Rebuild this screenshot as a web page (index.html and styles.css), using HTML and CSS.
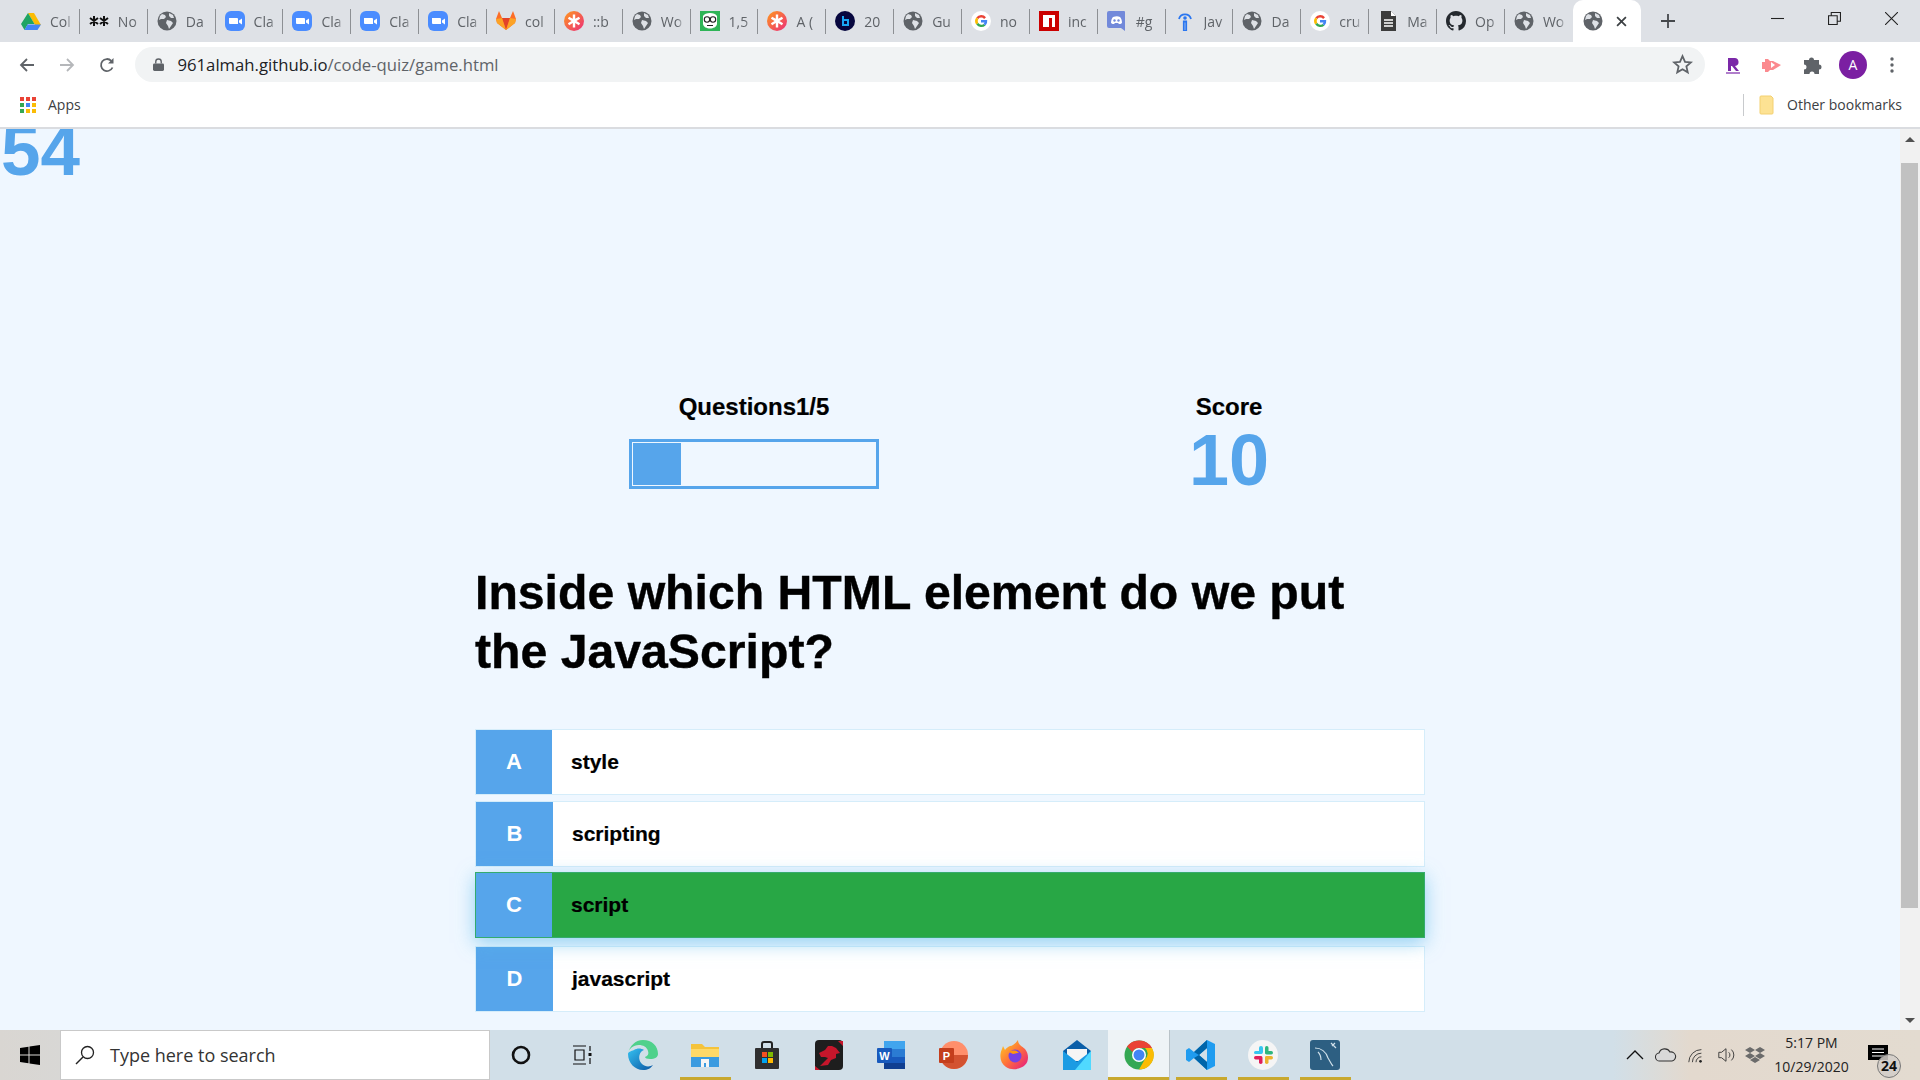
FILE: index.html
```html
<!DOCTYPE html>
<html lang="en">
<head>
    <meta charset="UTF-8">
    <meta name="viewport" content="width=device-width, initial-scale=1.0">
    <title>Code Quiz</title>
    <link rel="stylesheet" href="styles.css">
</head>
<body>

<!-- shared icons -->
<svg class="defs" width="0" height="0">
    <symbol id="i-globe" viewBox="0 0 20 20">
        <circle cx="10" cy="10" r="9.500" fill="#5f6368"/>
        <path d="M5 3l3 1 1 2-2 2-3 0-2 1 1-4zM10 9l4 1 2 2-2 3-2 3-1-3-2-3zM12 2l4 2 1 3-3 0-2-2z" fill="#dee1e6"/>
    </symbol>
    <symbol id="i-zoom" viewBox="0 0 20 20">
        <rect width="20" height="20" rx="6" fill="#4a8cff"/>
        <path d="M4 7h8a1 1 0 0 1 1 1v5H5a1 1 0 0 1-1-1zM14 9.500l3-2v6l-3-2z" fill="#fff"/>
    </symbol>
    <symbol id="i-g" viewBox="0 0 20 20">
        <circle cx="10" cy="10" r="10" fill="#fff"/>
        <path d="M15 6.200A6.200 6.200 0 0 0 5.300 6.400l2 1.600A3.700 3.700 0 0 1 13.100 8z" fill="#ea4335"/>
        <path d="M5.300 6.400a6.200 6.200 0 0 0 0 7.200l2-1.600a3.700 3.700 0 0 1 0-4z" fill="#fbbc05"/>
        <path d="M5.300 13.600a6.200 6.200 0 0 0 9.200.8l-2-1.500a3.700 3.700 0 0 1-5.200-.9z" fill="#34a853"/>
        <path d="M16.200 9H10v2.400h3.500a3 3 0 0 1-1 1.500l2 1.500A6.200 6.200 0 0 0 16.200 9z" fill="#4285f4"/>
    </symbol>
    <symbol id="i-star" viewBox="0 0 20 20">
        <defs>
            <linearGradient id="g-star" x1="0" y1="0" x2="1" y2="1">
                <stop offset="0" stop-color="#ff9a1e"/>
                <stop offset="1" stop-color="#ec2c7a"/>
            </linearGradient>
        </defs>
        <circle cx="10" cy="10" r="10" fill="url(#g-star)"/>
        <path d="M8.800 3.500h2.400v4.300l3.700-2.100 1.200 2-3.700 2.300 3.700 2.200-1.200 2-3.700-2.100v4.300H8.800v-4.300l-3.700 2.100-1.200-2 3.700-2.200-3.700-2.300 1.200-2 3.700 2.100z" fill="#fff"/>
    </symbol>
</svg>

<header class="chrome">
    <div class="tabstrip">
        <div class="tab">
            <svg class="fav" viewBox="0 0 20 20"><path d="M7 2h6l7 12h-6z" fill="#fbbc04"/><path d="M7 2l6.500 11H7L3.500 19 0 13z" fill="#1fa463"/><path d="M6.500 13.500H20L16.500 19H3.500z" fill="#4285f4"/></svg>
            <span class="tab-text">Col</span>
        </div>
        <div class="tab">
            <svg class="fav" viewBox="0 0 20 20"><path d="M5 5v10M1 7l8 6M9 7l-8 6M15 5v10M11 7l8 6M19 7l-8 6" stroke="#111" stroke-width="2" fill="none"/></svg>
            <span class="tab-text">No</span>
        </div>
        <div class="tab"><svg class="fav"><use href="#i-globe"/></svg><span class="tab-text">Da</span></div>
        <div class="tab"><svg class="fav"><use href="#i-zoom"/></svg><span class="tab-text">Cla</span></div>
        <div class="tab"><svg class="fav"><use href="#i-zoom"/></svg><span class="tab-text">Cla</span></div>
        <div class="tab"><svg class="fav"><use href="#i-zoom"/></svg><span class="tab-text">Cla</span></div>
        <div class="tab"><svg class="fav"><use href="#i-zoom"/></svg><span class="tab-text">Cla</span></div>
        <div class="tab">
            <svg class="fav" viewBox="0 0 20 20"><path d="M10 19L1 12l-1-4L3 0l3 7h8l3-7 3 8-1 4z" fill="#fc6d26"/><path d="M10 19L6 7h8z" fill="#e24329"/><path d="M10 19L1 12l-1-4 6-1zM10 19l9-7 1-4-6-1z" fill="#fca326"/></svg>
            <span class="tab-text">col</span>
        </div>
        <div class="tab"><svg class="fav"><use href="#i-star"/></svg><span class="tab-text">::b</span></div>
        <div class="tab"><svg class="fav"><use href="#i-globe"/></svg><span class="tab-text">Wo</span></div>
        <div class="tab">
            <svg class="fav" viewBox="0 0 20 20"><rect width="20" height="20" fill="#2fb457"/><path d="M3 5c2-4 12-4 14 0v8c-1 6-13 6-14 0z" fill="#fff"/><circle cx="7" cy="8.500" r="2.700" fill="#fff" stroke="#222" stroke-width="1.100"/><circle cx="13" cy="8.500" r="2.700" fill="#fff" stroke="#222" stroke-width="1.100"/><path d="M7 14.500h6" stroke="#222"/></svg>
            <span class="tab-text">1,5</span>
        </div>
        <div class="tab"><svg class="fav"><use href="#i-star"/></svg><span class="tab-text">A (</span></div>
        <div class="tab">
            <svg class="fav" viewBox="0 0 20 20"><circle cx="10" cy="10" r="10" fill="#07073f"/><path d="M8 5v9h5v-5H8" fill="none" stroke="#19a7f5" stroke-width="2"/></svg>
            <span class="tab-text">20</span>
        </div>
        <div class="tab"><svg class="fav"><use href="#i-globe"/></svg><span class="tab-text">Gu</span></div>
        <div class="tab"><svg class="fav"><use href="#i-g"/></svg><span class="tab-text">no</span></div>
        <div class="tab">
            <svg class="fav" viewBox="0 0 20 20"><rect width="20" height="20" fill="#cb0000"/><path d="M4 4h12v12h-3V7h-3v9H4z" fill="#fff"/></svg>
            <span class="tab-text">inc</span>
        </div>
        <div class="tab">
            <svg class="fav" viewBox="0 0 20 20"><path d="M2 0h15a1 1 0 0 1 1 1v19l-4-3H2a2 2 0 0 1-2-2V2a2 2 0 0 1 2-2z" fill="#7289da"/><path d="M4 12c0-3 1-5 2-6 3-1 5-1 7 0 1 1 2 3 2 6-1 1-2 1-3 1l-1-1H8l-1 1c-1 0-2 0-3-1z" fill="#fff"/><circle cx="7.500" cy="9.500" r="1.200" fill="#7289da"/><circle cx="11.500" cy="9.500" r="1.200" fill="#7289da"/></svg>
            <span class="tab-text">#g</span>
        </div>
        <div class="tab">
            <svg class="fav" viewBox="0 0 20 20"><circle cx="10" cy="7" r="1.800" fill="#2a76f0"/><path d="M8.800 10.500h2.400V20H8.800zM4 8a6.200 6.200 0 0 1 12 0" fill="none" stroke="#2a76f0" stroke-width="1.800"/></svg>
            <span class="tab-text">Jav</span>
        </div>
        <div class="tab"><svg class="fav"><use href="#i-globe"/></svg><span class="tab-text">Da</span></div>
        <div class="tab"><svg class="fav"><use href="#i-g"/></svg><span class="tab-text">cru</span></div>
        <div class="tab">
            <svg class="fav" viewBox="0 0 20 20"><path d="M3 0h10l5 5v15H3z" fill="#3c3c3c"/><path d="M6 9h9M6 12h9M6 15h9" stroke="#fff" stroke-width="1.300"/><path d="M13 0v5h5z" fill="#fff"/></svg>
            <span class="tab-text">Ma</span>
        </div>
        <div class="tab">
            <svg class="fav" viewBox="0 0 16 16"><path fill="#24292e" d="M8 0C3.580 0 0 3.580 0 8c0 3.540 2.290 6.530 5.470 7.590.4.070.55-.17.55-.38 0-.19-.01-.82-.01-1.490-2.010.37-2.530-.49-2.690-.94-.09-.23-.48-.94-.82-1.130-.28-.15-.68-.52-.01-.53.630-.01 1.080.580 1.230.820.720 1.210 1.870.870 2.330.660.070-.520.280-.870.510-1.070-1.780-.200-3.640-.890-3.640-3.950 0-.870.310-1.590.820-2.150-.080-.200-.360-1.020.080-2.120 0 0 .670-.210 2.200.820.640-.180 1.320-.270 2-.270s1.360.090 2 .270c1.530-1.040 2.200-.820 2.200-.820.440 1.100.160 1.920.080 2.120.510.560.820 1.270.820 2.150 0 3.070-1.870 3.750-3.650 3.950.290.250.540.730.540 1.480 0 1.070-.010 1.930-.010 2.200 0 .210.150.460.550.380A8.010 8.010 0 0 0 16 8c0-4.420-3.580-8-8-8z"/></svg>
            <span class="tab-text">Op</span>
        </div>
        <div class="tab tab-last"><svg class="fav"><use href="#i-globe"/></svg><span class="tab-text">Wo</span></div>
        <div class="tab-active">
            <svg class="fav"><use href="#i-globe"/></svg>
            <svg class="tab-close" viewBox="0 0 10 10"><path d="M1 1l8 8M9 1l-8 8" stroke="#3c4043" stroke-width="1.600"/></svg>
        </div>
        <svg class="tab-new" viewBox="0 0 14 14"><path d="M7 0v14M0 7h14" stroke="#45484c" stroke-width="1.800"/></svg>
        <div class="win-btns">
            <svg class="win-btn" viewBox="0 0 12 12"><path d="M0 6h12" stroke="#222" stroke-width="1"/></svg>
            <svg class="win-btn" viewBox="0 0 12 12"><path d="M.5 3.500h8v8h-8zM3 3.500V.5h8.500v8H8.500" fill="none" stroke="#222"/></svg>
            <svg class="win-btn" viewBox="0 0 12 12"><path d="M0 0l12 12M12 0L0 12" stroke="#222"/></svg>
        </div>
    </div>

    <div class="toolbar">
        <svg class="nav-ico" viewBox="0 0 16 16"><path d="M15 8H2M8 2L2 8l6 6" fill="none" stroke="#5f6368" stroke-width="1.800"/></svg>
        <svg class="nav-ico" viewBox="0 0 16 16"><path d="M1 8h13M8 2l6 6-6 6" fill="none" stroke="#b5b7ba" stroke-width="1.800"/></svg>
        <svg class="nav-ico" viewBox="0 0 16 16"><path d="M13.500 10.500A6 6 0 1 1 12.300 3.800" fill="none" stroke="#5f6368" stroke-width="1.800"/><path d="M14.500 1v5.500H9z" fill="#5f6368"/></svg>
        <div class="omnibox">
            <svg class="lock" viewBox="0 0 12 14"><path d="M3 6V4a3 3 0 0 1 6 0v2" fill="none" stroke="#5f6368" stroke-width="1.500"/><rect y="6" width="12" height="8" rx="1.500" fill="#5f6368"/></svg>
            <span class="url"><span class="url-host">961almah.github.io</span>/code-quiz/game.html</span>
            <svg class="bm-star" viewBox="0 0 20 20"><path d="M10 2l2.400 5.500 5.600.5-4.300 3.800 1.300 5.700-5-3-5 3 1.300-5.700L2 8l5.600-.5z" fill="none" stroke="#5f6368" stroke-width="1.700"/></svg>
        </div>
        <div class="ext-row">
            <svg class="ext ext-r" viewBox="0 0 20 20"><path d="M5 16V3h6a4 4 0 0 1 1 8l4 5h-3l-4-5H8v5z" fill="#7b28a8"/><path d="M3 18h14" stroke="#7b28a8" stroke-width="1.200"/></svg>
            <svg class="ext ext-play" viewBox="0 0 20 20"><path d="M0 7h3V4h3l2 2h3l8 4-8 5H8l-2 2H3v-3H0z" fill="#fb8a8f"/><path d="M9 7l4 3-4 3z" fill="#fff"/></svg>
            <svg class="ext ext-puzzle" viewBox="0 0 20 20"><path d="M1 5h5a2.500 2.500 0 1 1 5 0h5v4.500a2.500 2.500 0 1 1 0 5V19h-4.500a2.500 2.500 0 1 0-5 0H1v-4.500a2.500 2.500 0 1 0 0-5z" fill="#5f6368"/></svg>
            <div class="avatar">A</div>
            <svg class="ext-menu" viewBox="0 0 4 16"><circle cx="2" cy="2" r="1.700" fill="#5f6368"/><circle cx="2" cy="8" r="1.700" fill="#5f6368"/><circle cx="2" cy="14" r="1.700" fill="#5f6368"/></svg>
        </div>
    </div>

    <div class="bookmarks">
        <svg class="apps" viewBox="0 0 16 16">
            <rect width="4" height="4" fill="#ea4335"/><rect x="6" width="4" height="4" fill="#ea4335"/><rect x="12" width="4" height="4" fill="#ea4335"/>
            <rect y="6" width="4" height="4" fill="#34a853"/><rect x="6" y="6" width="4" height="4" fill="#4285f4"/><rect x="12" y="6" width="4" height="4" fill="#fbbc05"/>
            <rect y="12" width="4" height="4" fill="#34a853"/><rect x="6" y="12" width="4" height="4" fill="#fbbc05"/><rect x="12" y="12" width="4" height="4" fill="#fbbc05"/>
        </svg>
        <span class="bm-text">Apps</span>
        <div class="bm-other">
            <span class="bm-sep"></span>
            <svg class="folder" viewBox="0 0 16 20"><path d="M2 1h10l2 2v15a1 1 0 0 1-1 1H2a1 1 0 0 1-1-1V2a1 1 0 0 1 1-1z" fill="#fde293" stroke="#f3d071"/></svg>
            <span class="bm-text">Other bookmarks</span>
        </div>
    </div>
</header>

<div class="viewport">
    <main class="page">
        <div class="timer">54</div>
        <div class="quiz">
            <div class="hud">
                <div class="hud-item">
                    <p class="hud-label">Questions1/5</p>
                    <div class="progress"><div class="progress-fill"></div></div>
                </div>
                <div class="hud-item">
                    <p class="hud-label">Score</p>
                    <div class="hud-score">10</div>
                </div>
            </div>
            <h2 class="question">Inside which HTML element do we put the JavaScript?</h2>
            <div class="choices">
                <div class="choice"><div class="choice-prefix">A</div><div class="choice-text">style</div></div>
                <div class="choice choice-wide"><div class="choice-prefix">B</div><div class="choice-text">scripting</div></div>
                <div class="choice choice-correct"><div class="choice-prefix">C</div><div class="choice-text">script</div></div>
                <div class="choice choice-wide"><div class="choice-prefix">D</div><div class="choice-text">javascript</div></div>
            </div>
        </div>
    </main>
    <div class="scrollbar">
        <div class="scroll-btn"><span class="arrow-up"></span></div>
        <div class="scroll-track"><div class="scroll-thumb"></div></div>
        <div class="scroll-btn"><span class="arrow-down"></span></div>
    </div>
</div>

<footer class="taskbar">
    <div class="start">
        <svg class="start-logo" viewBox="0 0 20 20"><path d="M0 3l8.500-1.300V9.500H0zM9.500 1.500L20 0v9.500H9.500zM0 10.500h8.500v7.800L0 17zM9.500 10.500H20V20L9.500 18.500z" fill="#000"/></svg>
    </div>
    <div class="search">
        <svg class="search-ico" viewBox="0 0 20 20"><circle cx="12.500" cy="7.500" r="6" fill="none" stroke="#222" stroke-width="1.300"/><path d="M8 12l-7 7" stroke="#222" stroke-width="1.400"/></svg>
        <span class="search-text">Type here to search</span>
    </div>
    <div class="task-apps">
        <div class="task task-narrow"><svg class="task-ico task-small" viewBox="0 0 20 20"><circle cx="10" cy="10" r="8" fill="none" stroke="#111" stroke-width="2.600"/></svg></div>
        <div class="task task-narrow"><svg class="task-ico task-small" viewBox="0 0 20 20"><path d="M1 1h13M1 19h13M3 5h9v10H3zM18 1v5M18 13v6" fill="none" stroke="#111" stroke-width="1.200"/><rect x="16.500" y="8" width="3" height="3" fill="#111"/></svg></div>
        <div class="task">
            <svg class="task-ico" viewBox="0 0 30 30"><defs><linearGradient id="g-edge" x1="0" y1="0" x2="1" y2="1"><stop offset="0" stop-color="#35c1f1"/><stop offset="1" stop-color="#0b57a4"/></linearGradient></defs><path d="M15 0c9 0 15 6 15 14 0 3-3 5-8 5-3 0-5-1-5-2 3-1 4-3 3-6-1-4-5-6-9-6-6 0-10 4-11 8C2 6 7 0 15 0z" fill="#4fd18b"/><path d="M0 14c0 9 7 16 15 16 5 0 8-2 10-5-3 2-8 2-11-1-3-3-4-8-1-12 1-1 2-2 3-2-3-2-7-2-10 0-3 1-6 2-6 4z" fill="url(#g-edge)"/></svg>
        </div>
        <div class="task task-open">
            <svg class="task-ico" viewBox="0 0 30 30"><path d="M1 4h11l3 3h14v4H1z" fill="#f5c33b"/><path d="M1 9h28v18H1z" fill="#ffd968"/><path d="M1 17h28v10H1z" fill="#3b9be0"/><path d="M11 19h8v8h-3v-4h-2v4h-3z" fill="#f5f5f5"/></svg>
        </div>
        <div class="task">
            <svg class="task-ico" viewBox="0 0 30 30"><path d="M10 8V4a2 2 0 0 1 2-2h6a2 2 0 0 1 2 2v4" fill="none" stroke="#222" stroke-width="2"/><rect x="3" y="8" width="24" height="21" rx="1" fill="#2f2f2f"/><rect x="10" y="12" width="5" height="5" fill="#f25022"/><rect x="16" y="12" width="5" height="5" fill="#7fba00"/><rect x="10" y="18" width="5" height="5" fill="#00a4ef"/><rect x="16" y="18" width="5" height="5" fill="#ffb900"/></svg>
        </div>
        <div class="task">
            <svg class="task-ico" viewBox="0 0 30 30"><rect x="1" y="0" width="28" height="30" rx="4" fill="#1e1e1e"/><path d="M24 1l5 5V1zM1 26l5 4H1z" fill="#c5162b"/><path d="M5 13l6-3 3-4 4 0 4 2 4 5-4 1 0 4-5 2-3 5-8 1 5-5 3-3-3-1-4 0z" fill="#c5162b"/></svg>
        </div>
        <div class="task">
            <svg class="task-ico" viewBox="0 0 30 30"><rect x="8" y="1" width="21" height="8" fill="#41a5ee"/><rect x="8" y="9" width="21" height="8" fill="#2b7cd3"/><rect x="8" y="17" width="21" height="6" fill="#185abd"/><rect x="8" y="23" width="21" height="6" fill="#103f91"/><rect x="1" y="8" width="15" height="15" rx="1" fill="#185abd"/><text class="task-letter" x="8.500" y="20">W</text></svg>
        </div>
        <div class="task">
            <svg class="task-ico" viewBox="0 0 30 30"><circle cx="16" cy="15" r="14" fill="#ff8f6b"/><path d="M16 15h14a14 14 0 0 1-28 0z" fill="#d35230"/><rect x="1" y="8" width="15" height="15" rx="1" fill="#c43e1c"/><text class="task-letter" x="8.500" y="20">P</text></svg>
        </div>
        <div class="task">
            <svg class="task-ico" viewBox="0 0 30 30"><defs><linearGradient id="g-fox" x1="0" y1="0" x2="1" y2="1"><stop offset="0" stop-color="#ffd31f"/><stop offset=".5" stop-color="#ff7139"/><stop offset="1" stop-color="#e31587"/></linearGradient></defs><path d="M18 0c0 5 4 6 7 9 4 5 4 12 0 16s-13 6-19 2S-1 15 2 9l1-3 2 4c1-2 3-3 5-4 2 0 5-2 8-6z" fill="url(#g-fox)"/><circle cx="15" cy="16" r="6.500" fill="#7542e5"/><path d="M9 12c3-2 8-2 10 1-3 0-4 1-6 1z" fill="#ff980e"/></svg>
        </div>
        <div class="task">
            <svg class="task-ico" viewBox="0 0 30 30"><path d="M1 11L15 0l14 11v19H1z" fill="#0a5ea8"/><path d="M5 9h20v12H5z" fill="#f5f5f5"/><path d="M1 11l14 11 14-11v19H1z" fill="#1b9be3"/><path d="M29 11v19H13z" fill="#50d9ff"/></svg>
        </div>
        <div class="task task-open task-active">
            <svg class="task-ico" viewBox="0 0 30 30"><circle cx="15" cy="15" r="14.500" fill="#34a853"/><path d="M15 .5A14.500 14.500 0 0 1 28 8H15a7 7 0 0 0-6.500 4L3 6.500A14.500 14.500 0 0 1 15 .5z" fill="#ea4335"/><path d="M28 8a14.500 14.500 0 0 1-13 21.500L21 19a7 7 0 0 0 0-11z" fill="#fbbc05"/><circle cx="15" cy="15" r="7" fill="#fff"/><circle cx="15" cy="15" r="5.500" fill="#4285f4"/></svg>
        </div>
        <div class="task task-open">
            <svg class="task-ico" viewBox="0 0 30 30"><path d="M21 0l8 4v22l-8 4-13-12-5 4-3-2V10l3-2 5 4zM21 8l-8 7 8 7z" fill="#1f9cf0"/><path d="M21 0v8l-8 7-5-3zM8 18l5-3 8 7v8z" fill="#0065a9"/></svg>
        </div>
        <div class="task task-open">
            <svg class="task-ico" viewBox="0 0 30 30"><circle cx="15" cy="15" r="15" fill="#f5f5f5"/><rect x="11" y="6" width="4" height="8" rx="2" fill="#36c5f0"/><rect x="6" y="11" width="8" height="3" rx="1.500" fill="#36c5f0"/><rect x="17" y="6" width="3.500" height="8" rx="1.700" fill="#2eb67d"/><rect x="17" y="11" width="8" height="3.500" rx="1.700" fill="#2eb67d"/><rect x="17" y="16" width="8" height="3.500" rx="1.700" fill="#ecb22e"/><rect x="17" y="16" width="3.500" height="8" rx="1.700" fill="#ecb22e"/><rect x="11" y="16" width="3.500" height="8" rx="1.700" fill="#e01e5a"/><rect x="6" y="16" width="8" height="3.500" rx="1.700" fill="#e01e5a"/></svg>
        </div>
        <div class="task task-open">
            <svg class="task-ico" viewBox="0 0 30 30"><rect width="30" height="30" rx="3" fill="#2d5f82"/><path d="M5 8c6 0 11 4 13 10 2 3 3 6 5 8M8 12c2 2 3 5 3 8M21 3l5 5M25 3l-3 3" fill="none" stroke="#cfe0ea" stroke-width="1.200"/></svg>
        </div>
    </div>
    <div class="tray">
        <svg class="tray-ico" viewBox="0 0 20 12"><path d="M2 10l8-8 8 8" fill="none" stroke="#111" stroke-width="1.300"/></svg>
        <svg class="tray-ico tray-wide" viewBox="0 0 22 14"><path d="M5 13a4 4 0 0 1-1-8 6 6 0 0 1 11-1 4.500 4.500 0 0 1 2 9z" fill="#d9d9d9" stroke="#333" stroke-width="1.100"/></svg>
        <svg class="tray-ico" viewBox="0 0 20 20"><path d="M2 18A14 14 0 0 1 16 4M6 18A10 10 0 0 1 16 8M10 18a6 6 0 0 1 6-6" fill="none" stroke="#333" stroke-width="1"/><circle cx="15" cy="17" r="1.500" fill="#222"/></svg>
        <svg class="tray-ico" viewBox="0 0 20 20"><path d="M2 7h3l5-4v14l-5-4H2zM13 7a4 4 0 0 1 0 6M16 4a8 8 0 0 1 0 12" fill="none" stroke="#333" stroke-width="1"/></svg>
        <svg class="tray-ico" viewBox="0 0 20 18"><path d="M5 1l5 3-5 3-5-3zM15 1l5 3-5 3-5-3zM5 7l5 3-5 3-5-3zM15 7l5 3-5 3-5-3zM10 11l5 3-5 3-5-3z" fill="#6b6b6b"/></svg>
        <div class="clock"><span>5:17 PM</span><span>10/29/2020</span></div>
        <div class="notify">
            <svg class="notify-ico" viewBox="0 0 20 18"><path d="M0 0h20v15H0z" fill="#000"/><path d="M4 4h12M4 7.500h12M4 11h12" stroke="#fff"/></svg>
            <span class="notify-badge">24</span>
        </div>
    </div>
</footer>

</body>
</html>
```

FILE: styles.css
```css
html, body {
    margin: 0;
    padding: 0;
    height: 100%;
    overflow: hidden;
}

body {
    display: flex;
    flex-direction: column;
    font-family: "Liberation Sans", Arial, sans-serif;
    background-color: #eff7ff;
}

.defs {
    position: absolute;
}

/* browser chrome */
.chrome {
    flex: none;
    background-color: #fff;
    border-bottom: 2px solid #dadce0;
    font-family: "Open Sans", "Noto Sans", sans-serif;
}

.tabstrip {
    display: flex;
    align-items: center;
    height: 42px;
    padding-left: 12px;
    background-color: #dee1e6;
}

.tab {
    flex: none;
    display: flex;
    align-items: center;
    gap: 9px;
    box-sizing: border-box;
    width: 67.86px;
    height: 25px;
    padding-left: 9px;
    border-right: 1px solid #8d9094;
    overflow: hidden;
}

.tab-last {
    border-right: none;
}

.fav {
    flex: none;
    width: 20px;
    height: 20px;
}

.tab-text {
    flex: none;
    width: 23px;
    overflow: hidden;
    white-space: nowrap;
    font-size: 14px;
    color: #5f6368;
    -webkit-mask-image: linear-gradient(90deg, #000 70%, transparent);
    mask-image: linear-gradient(90deg, #000 70%, transparent);
}

.tab-active {
    flex: none;
    display: flex;
    align-items: center;
    gap: 13px;
    box-sizing: border-box;
    width: 68px;
    height: 42px;
    padding-left: 10px;
    background-color: #fff;
    border-radius: 10px 10px 0 0;
}

.tab-close {
    width: 11px;
    height: 11px;
}

.tab-new {
    flex: none;
    width: 14px;
    height: 14px;
    margin-left: 20px;
}

.win-btns {
    display: flex;
    align-items: center;
    gap: 44px;
    margin-left: auto;
    padding-right: 22px;
    height: 42px;
    margin-top: -6px;
}

.win-btn {
    width: 13px;
    height: 13px;
}

.toolbar {
    display: flex;
    align-items: center;
    height: 45px;
    padding-left: 19px;
    box-sizing: border-box;
}

.nav-ico {
    flex: none;
    width: 16px;
    height: 16px;
    margin-right: 24px;
}

.nav-ico:nth-child(3) {
    margin-right: 20px;
}

.omnibox {
    flex: none;
    display: flex;
    align-items: center;
    box-sizing: border-box;
    width: 1570px;
    height: 35px;
    padding: 0 12px 0 18px;
    background-color: #f1f3f4;
    border-radius: 18px;
}

.lock {
    width: 11px;
    height: 13px;
    margin-right: 13.5px;
}

.url {
    font-size: 16.7px;
    color: #5f6368;
}

.url-host {
    color: #202124;
}

.bm-star {
    width: 21px;
    height: 21px;
    margin-left: auto;
}

.ext-row {
    display: flex;
    align-items: center;
    margin-left: 18px;
}

.ext {
    width: 20px;
    height: 20px;
}

.ext-r {
    margin-right: 19px;
}

.ext-play {
    margin-right: 21px;
}

.ext-puzzle {
    margin-right: 16px;
}

.avatar {
    width: 28px;
    height: 28px;
    margin-right: 23px;
    border-radius: 50%;
    background-color: #7b1fa2;
    color: #fff;
    font-size: 14px;
    line-height: 28px;
    text-align: center;
}

.ext-menu {
    width: 4px;
    height: 16px;
}

.bookmarks {
    display: flex;
    align-items: center;
    height: 40px;
    box-sizing: border-box;
    padding: 0 18px 5px 20px;
}

.apps {
    width: 16px;
    height: 16px;
    margin-right: 12px;
}

.bm-text {
    font-size: 14px;
    color: #3c4043;
}

.bm-other {
    display: flex;
    align-items: center;
    margin-left: auto;
}

.bm-sep {
    width: 1px;
    height: 22px;
    margin-right: 15px;
    background-color: #c8cacd;
}

.folder {
    width: 16px;
    height: 20px;
    margin-right: 12px;
}

/* page */
.viewport {
    flex: 1;
    display: flex;
    min-height: 0;
}

.page {
    flex: 1;
    min-width: 0;
    overflow: hidden;
    background-color: #eff7ff;
}

.timer {
    margin-top: -12px;
    padding-left: 1px;
    font-size: 71px;
    font-weight: bold;
    line-height: 67px;
    color: #56a5eb;
}

.quiz {
    width: 950px;
    margin: 0 auto;
    padding-top: 209px;
}

.hud {
    display: flex;
    justify-content: space-between;
    padding: 0 71px 0 154px;
    height: 170px;
}

.hud-item {
    display: flex;
    flex-direction: column;
    align-items: center;
    width: 250px;
}

.hud-label {
    margin: 0;
    font-size: 24px;
    font-weight: bold;
    line-height: 28px;
    color: #000;
    -webkit-text-stroke: 0.2px #000;
}

.progress {
    box-sizing: border-box;
    width: 250px;
    height: 50px;
    margin-top: 18px;
    padding: 1px;
    border: 3px solid #56a5eb;
}

.progress-fill {
    width: 20%;
    height: 100%;
    background-color: #56a5eb;
}

.hud-score {
    margin-top: 6px;
    font-size: 72px;
    font-weight: bold;
    line-height: 67px;
    color: #56a5eb;
}

.question {
    margin: 0;
    font-size: 48.2px;
    font-weight: bold;
    line-height: 59px;
    color: #000;
    -webkit-text-stroke: 0.4px #000;
}

.choices {
    display: flex;
    flex-direction: column;
    gap: 6px;
    margin-top: 48px;
}

.choice {
    display: flex;
    box-sizing: border-box;
    height: 66px;
    background-color: #fff;
    border: 1px solid rgba(86, 185, 235, 0.25);
    font-weight: bold;
}

.choice-prefix {
    flex: none;
    width: 76px;
    background-color: #56a5eb;
    color: #fff;
    font-size: 22px;
    line-height: 64px;
    text-align: center;
}

.choice-wide .choice-prefix {
    width: 77px;
}

.choice-text {
    flex: 1;
    padding-left: 19px;
    font-size: 21px;
    line-height: 64px;
    color: #000;
    -webkit-text-stroke: 0.2px #000;
}

.choice-correct {
    position: relative;
    z-index: 1;
    margin-top: -1px;
    margin-bottom: 2px;
    background-color: #28a745;
    box-shadow: 0 5px 17.5px 0 rgba(86, 185, 235, 0.6);
}

/* page scrollbar */
.scrollbar {
    flex: none;
    display: flex;
    flex-direction: column;
    width: 20px;
    background-color: #f1f1f1;
}

.scroll-btn {
    flex: none;
    display: flex;
    align-items: center;
    justify-content: center;
    height: 20px;
}

.arrow-up {
    border: 5px solid transparent;
    border-top: none;
    border-bottom: 5px solid #505050;
}

.arrow-down {
    border: 5px solid transparent;
    border-bottom: none;
    border-top: 5px solid #505050;
}

.scroll-track {
    flex: 1;
    padding: 14px 2px 0 1px;
}

.scroll-thumb {
    height: 745px;
    background-color: #c1c1c1;
}

/* windows taskbar */
.taskbar {
    flex: none;
    display: flex;
    align-items: center;
    height: 50px;
    font-family: "Open Sans", "Noto Sans", sans-serif;
    background: linear-gradient(90deg, #d9d6d2 0, #d1dfe8 25%, #d1dfe8 84%, #e3d9ce 88%, #e3dbd0 100%);
}

.start {
    flex: none;
    display: flex;
    align-items: center;
    justify-content: center;
    width: 60px;
}

.start-logo {
    width: 20px;
    height: 20px;
}

.search {
    flex: none;
    display: flex;
    align-items: center;
    box-sizing: border-box;
    width: 430px;
    height: 50px;
    padding-left: 14px;
    background-color: #fff;
    border: 1px solid #c9c9c9;
}

.search-ico {
    width: 20px;
    height: 20px;
    margin-right: 15px;
}

.search-text {
    font-size: 18px;
    color: #333;
}

.task-apps {
    display: flex;
}

.task {
    position: relative;
    flex: none;
    display: flex;
    align-items: center;
    justify-content: center;
    width: 62px;
    height: 50px;
}

.task-narrow {
    width: 61px;
}

/* running-app underline */
.task-open::after {
    content: "";
    position: absolute;
    left: 6px;
    right: 5px;
    bottom: 0;
    height: 3px;
    background-color: #c8a82e;
}

.task-active {
    background-color: #eef3f6;
    border-right: 1px solid #b9c2c8;
    box-sizing: border-box;
}

.task-active::after {
    left: 0;
    right: 0;
}

.task-ico {
    width: 30px;
    height: 30px;
}

.task-small {
    width: 20px;
    height: 20px;
}

.task-letter {
    font-family: "Liberation Sans", Arial, sans-serif;
    font-size: 11px;
    font-weight: bold;
    fill: #fff;
    text-anchor: middle;
}

.tray {
    display: flex;
    align-items: center;
    gap: 9.5px;
    margin-left: auto;
}

.tray-ico {
    width: 20px;
    height: 18px;
}

.tray-wide {
    width: 22px;
}

.clock {
    display: flex;
    flex-direction: column;
    align-items: center;
    width: 74px;
    font-size: 14px;
    line-height: 24px;
    white-space: nowrap;
    color: #222;
}

.notify {
    position: relative;
    width: 62px;
    height: 50px;
}

.notify-ico {
    position: absolute;
    left: 10px;
    top: 15px;
    width: 20px;
    height: 18px;
}

.notify-badge {
    position: absolute;
    left: 19px;
    top: 24px;
    box-sizing: border-box;
    width: 24px;
    height: 24px;
    border: 1px solid #777;
    border-radius: 50%;
    background-color: rgba(210, 205, 200, 0.85);
    font-size: 14px;
    font-weight: bold;
    line-height: 22px;
    text-align: center;
    color: #111;
}
```
